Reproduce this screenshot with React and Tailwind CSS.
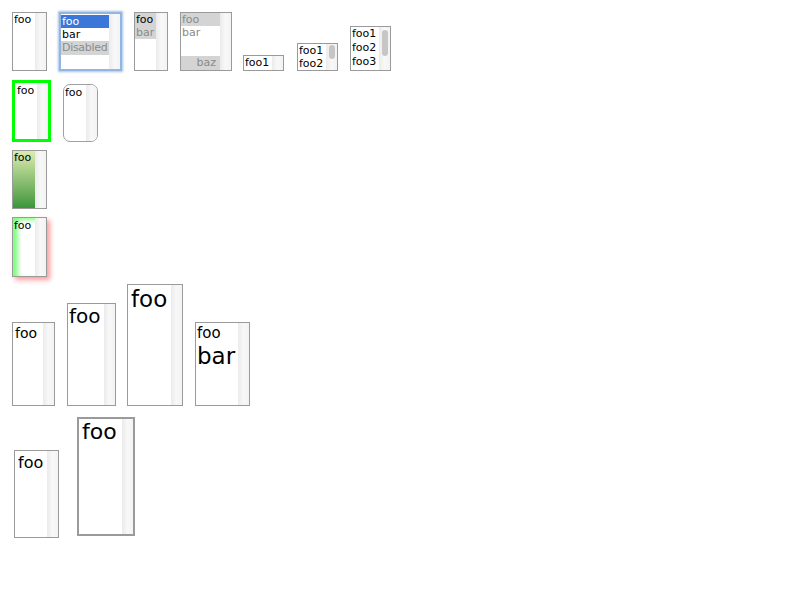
import React from "react";

const font = "font-['DejaVu_Sans',sans-serif]";

function Track({ thumb }) {
  return (
    <div className="w-[11px] shrink-0 relative bg-gradient-to-r from-[#ebebeb] via-[#f8f8f8] to-[#f3f3f3]">
      {thumb}
    </div>
  );
}

function Box({ className = "", optsClass = "", children, thumb }) {
  return (
    <div className={`flex shrink-0 bg-white ${className}`}>
      <div className={`flex-1 flex flex-col min-w-0 ${optsClass}`}>{children}</div>
      <Track thumb={thumb} />
    </div>
  );
}

const Opt = ({ className = "", children }) => (
  <div className={`h-[13px] leading-[13px] pl-[1px] whitespace-nowrap ${className}`}>{children}</div>
);

export default function App() {
  return (
    <div className={`${font} text-[11px] text-black pl-[12px] pt-[12px] w-[800px] h-[600px] bg-white`}>
      {/* row 1 */}
      <div className="flex items-end">
        <Box className="w-[35px] h-[59px] border border-[#9a9a9a]">
          <Opt>foo</Opt>
        </Box>
        <Box
          className="ml-[12px] w-[63px] h-[59px] border-2 border-[#93b5e0] shadow-[0_0_2px_1px_rgba(90,145,215,0.55)]"
          optsClass="pt-[1px]"
        >
          <Opt className="bg-[#3a77d8] text-white">foo</Opt>
          <Opt>bar</Opt>
          <Opt className="bg-[#d4d4d4] text-[#8c8c8c] h-[14px] tracking-[-0.3px]">Disabled</Opt>
        </Box>
        <Box className="ml-[12px] w-[34px] h-[59px] border border-[#9a9a9a]">
          <Opt className="bg-[#d4d4d4]">foo</Opt>
          <Opt className="bg-[#d4d4d4] text-[#8a8a8a]">bar</Opt>
        </Box>
        <Box className="ml-[12px] w-[52px] h-[59px] border border-[#9a9a9a] text-[#8a8a8a]">
          <Opt className="bg-[#d4d4d4]">foo</Opt>
          <Opt>bar</Opt>
          <Opt className="mt-auto bg-[#d4d4d4] text-right pr-[4px] h-[14px]">baz</Opt>
        </Box>
        <Box className="ml-[11px] w-[41px] h-[16px] border border-[#9a9a9a]">
          <Opt className="h-[14px] leading-[14px]">foo1</Opt>
        </Box>
        <Box
          className="ml-[13px] w-[41px] h-[28px] border border-[#9a9a9a]"
          thumb={<div className="absolute left-[3px] top-[1px] w-[6px] h-[14px] rounded-full bg-[#c6c6c6]" />}
        >
          <Opt>foo1</Opt>
          <Opt>foo2</Opt>
        </Box>
        <Box
          className="ml-[12px] w-[41px] h-[45px] border border-[#9a9a9a]"
          thumb={<div className="absolute left-[3px] top-[3px] w-[6px] h-[26px] rounded-full bg-[#c6c6c6]" />}
        >
          <Opt className="h-[14px] leading-[14px]">foo1</Opt>
          <Opt className="h-[14px] leading-[14px]">foo2</Opt>
          <Opt className="h-[14px] leading-[14px]">foo3</Opt>
        </Box>
      </div>

      {/* row 2 */}
      <div className="flex items-end mt-[9px]">
        <Box className="w-[39px] h-[62px] border-[3px] border-[#00ff00]" optsClass="pl-[1px] pt-[1px]">
          <Opt>foo</Opt>
        </Box>
        <Box className="ml-[12px] w-[35px] h-[58px] border border-[#a0a0a0] rounded-[7px] overflow-hidden">
          <Opt className="pt-[1px] h-[14px]">foo</Opt>
        </Box>
      </div>

      {/* row 3 */}
      <div className="flex mt-[8px]">
        <Box
          className="w-[35px] h-[59px] border border-[#9a9a9a]"
          optsClass="bg-gradient-to-b from-[#dcecb0] to-[#3a963a]"
        >
          <Opt>foo</Opt>
        </Box>
      </div>

      {/* row 4 */}
      <div className="flex mt-[8px]">
        <Box
          className="w-[35px] h-[60px] border border-[#9a9a9a] shadow-[3px_3px_5px_#ff9a9a]"
          optsClass="shadow-[inset_5px_2px_4px_#80ff80]"
        >
          <Opt className="pt-[1px] h-[14px]">foo</Opt>
        </Box>
      </div>

      {/* row 5 */}
      <div className="flex items-end mt-[7px]">
        <Box className="w-[43px] h-[84px] border border-[#9a9a9a]" optsClass="pt-[1px]">
          <div className="text-[14px] leading-[18px] pl-[2px]">foo</div>
        </Box>
        <Box className="ml-[12px] w-[49px] h-[103px] border border-[#9a9a9a]">
          <div className="text-[20px] leading-[24px] pl-[1px]">foo</div>
        </Box>
        <Box className="ml-[11px] w-[56px] h-[122px] border border-[#9a9a9a]">
          <div className="text-[23px] leading-[28px] pl-[3px]">foo</div>
        </Box>
        <Box className="ml-[12px] w-[55px] h-[84px] border border-[#9a9a9a]" optsClass="pt-[1px]">
          <div className="text-[15px] leading-[18px] pl-[1px]">foo</div>
          <div className="text-[23px] leading-[28px] pl-[1px]">bar</div>
        </Box>
      </div>

      {/* row 6 */}
      <div className="flex items-end mt-[11px]">
        <Box className="ml-[2px] w-[45px] h-[88px] border border-[#9a9a9a]" optsClass="pt-[2px]">
          <div className="text-[16px] leading-[20px] pl-[3px]">foo</div>
        </Box>
        <Box className="ml-[18px] mb-[2px] w-[58px] h-[119px] border-2 border-[#9a9a9a]">
          <div className="text-[22px] leading-[26px] pl-[3px]">foo</div>
        </Box>
      </div>
    </div>
  );
}
